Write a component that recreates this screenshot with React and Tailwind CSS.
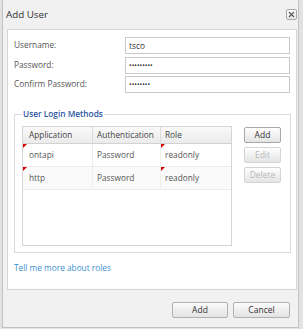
const rows = [
  { app: "ontapi", auth: "Password", role: "readonly" },
  { app: "http", auth: "Password", role: "readonly" },
]

function Marker() {
  return (
    <span className="absolute left-0 top-0 w-0 h-0 border-t-[4px] border-r-[4px] border-t-[#d40000] border-r-transparent" />
  )
}

function SideButton({ label, disabled }) {
  return (
    <button
      className={
        "h-[16px] w-[37px] rounded-[2px] border text-[8.5px] leading-none bg-gradient-to-b from-[#ffffff] to-[#e4e4e4] " +
        (disabled ? "border-[#d4d4d4] text-[#b8b8b8]" : "border-[#a8a8a8] text-[#333]")
      }
    >
      {label}
    </button>
  )
}

function Field({ label, value, type }) {
  return (
    <div className="flex items-center h-[17px]">
      <label className="w-[111px] text-[8.3px] text-[#555]">{label}</label>
      <input
        readOnly
        type={type}
        value={value}
        className={
          "h-[17px] w-[165px] border border-[#c9c9c9] bg-white px-[3px] text-[#333] outline-none " +
          (type === "password" ? "text-[7px]" : "text-[8.3px]")
        }
      />
    </div>
  )
}

export default function App() {
  return (
    <div className="w-[303px] h-[329px] bg-[#e2e2e2] overflow-hidden font-['Open_Sans',sans-serif]">
      <div className="ml-[2px] w-[297px] h-[328px] border-x border-b border-[#c2c2c2] bg-[#f1f1f1] flex flex-col">
        {/* title bar */}
        <div className="h-[29px] flex items-center justify-between pl-[3px] pr-[1px]">
          <span className="text-[9.8px] text-[#333] pt-[1px]">Add User</span>
          <button className="w-[11px] h-[11px] rounded-[2px] border border-[#a9a9a9] bg-gradient-to-b from-white to-[#e6e6e6] flex items-center justify-center mb-[1px]">
            <svg width="7" height="7" viewBox="0 0 7 7">
              <path d="M1 1L6 6M6 1L1 6" stroke="#555" strokeWidth="1.1" />
            </svg>
          </button>
        </div>

        {/* body */}
        <div className="ml-[4px] mr-[1px] h-[261px] border border-[#d5d5d5] bg-white px-[6px] pt-[7px]">
          <div className="flex flex-col gap-[2.5px]">
            <Field label="Username:" value="tsco" type="text" />
            <Field label="Password:" value="123456789" type="password" />
            <Field label="Confirm Password:" value="12345678" type="password" />
          </div>

          <fieldset className="mt-[15px] mr-[-1px] border border-[#dadada] pl-[7px] pr-[9px] pt-[6px] pb-[6px]">
            <legend className="px-[1px] text-[8.3px] leading-[12px] font-semibold text-[#2b55a0]">
              User Login Methods
            </legend>
            <div className="flex justify-between">
              <div className="w-[210px] h-[120px] border border-[#d5d5d5] text-[8.3px]">
                <div className="flex h-[17px] border-b border-[#d2d2d2] bg-gradient-to-b from-[#f9f9f9] to-[#ebebeb] text-[#444]">
                  <div className="w-[70px] border-r border-[#dcdcdc] pl-[6px] flex items-center">Application</div>
                  <div className="w-[68px] border-r border-[#dcdcdc] pl-[4px] flex items-center">Authentication</div>
                  <div className="flex-1 pl-[4px] flex items-center">Role</div>
                </div>
                {rows.map((r, i) => (
                  <div
                    key={r.app}
                    className={
                      "flex h-[23px] border-b border-[#ededed] text-[#555] " +
                      (i % 2 ? "bg-[#fafafa]" : "bg-white")
                    }
                  >
                    <div className="relative w-[70px] border-r border-[#eeeeee] pl-[6px] pt-[1px] flex items-center">
                      <Marker />
                      {r.app}
                    </div>
                    <div className="w-[68px] border-r border-[#eeeeee] pl-[4px] pt-[1px] flex items-center">{r.auth}</div>
                    <div className="relative flex-1 pl-[4px] pt-[1px] flex items-center">
                      <Marker />
                      {r.role}
                    </div>
                  </div>
                ))}
              </div>
              <div className="flex flex-col gap-[4px] pt-[1px]">
                <SideButton label="Add" />
                <SideButton label="Edit" disabled />
                <SideButton label="Delete" disabled />
              </div>
            </div>
          </fieldset>

          <a className="block mt-[9px] text-[8.3px] text-[#3a8fd0] cursor-pointer">Tell me more about roles</a>
        </div>

        {/* footer */}
        <div className="flex-1 flex justify-end items-start gap-[5px] pt-[12px] pr-[8px]">
          <button className="h-[16px] w-[56px] rounded-[2px] border border-[#b0b0b0] bg-gradient-to-b from-[#fbfbfb] to-[#e3e3e3] text-[8.5px] text-[#333]">
            Add
          </button>
          <button className="h-[16px] w-[57px] rounded-[2px] border border-[#b0b0b0] bg-gradient-to-b from-[#fbfbfb] to-[#e3e3e3] text-[8.5px] text-[#333]">
            Cancel
          </button>
        </div>
      </div>
    </div>
  )
}
